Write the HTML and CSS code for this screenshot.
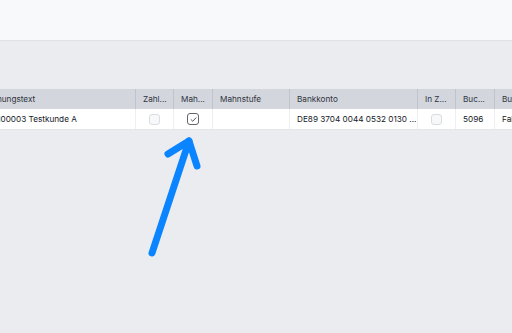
FILE: index.html
```html
<!DOCTYPE html>
<html lang="de">
<head>
<meta charset="utf-8">
<link rel="stylesheet" href="styles.css">
</head>
<body>
<div class="app">
  <header class="topbar"></header>
  <main class="content">
    <div class="grid-wrap">
      <div class="grid">
        <div class="row head">
          <div class="cell c1">Buchungstext</div>
          <div class="cell c2">Zahl...</div>
          <div class="cell c3">Mah...</div>
          <div class="cell c4">Mahnstufe</div>
          <div class="cell c5">Bankkonto</div>
          <div class="cell c6">In Z...</div>
          <div class="cell c7">Buc...</div>
          <div class="cell c8">Buchungsart</div>
        </div>
        <div class="row body">
          <div class="cell c1">KD-100003 Testkunde A</div>
          <div class="cell c2 center"><span class="cb"></span></div>
          <div class="cell c3 center"><span class="cb checked"><svg viewBox="0 0 12 12" width="9" height="9"><path d="M2.8 6.2 L5 8.3 L9.2 3.8" fill="none" stroke="#3b3f46" stroke-width="1.2" stroke-linecap="round" stroke-linejoin="round"/></svg></span></div>
          <div class="cell c4"></div>
          <div class="cell c5">DE89 3704 0044 0532 0130 ...</div>
          <div class="cell c6 center"><span class="cb"></span></div>
          <div class="cell c7">5096</div>
          <div class="cell c8">Faktura</div>
        </div>
      </div>
    </div>
  </main>
  <svg class="arrow" width="512" height="333" viewBox="0 0 512 333">
    <g fill="none" stroke="#0a84ff" stroke-width="7" stroke-linecap="round" stroke-linejoin="round">
      <path d="M152 253 L189 141"/>
      <path d="M168 154 L189 141 L197 166"/>
    </g>
  </svg>
</div>
</body>
</html>
```
FILE: styles.css
```css
* { box-sizing: border-box; }
html, body { margin: 0; padding: 0; }
body {
  font-family: Inter, "Noto Sans", sans-serif;
  background: #ebecef;
  width: 512px;
  height: 333px;
  overflow: hidden;
}
.app { position: relative; width: 512px; height: 333px; }
.topbar {
  height: 41px;
  background: #f8f9fb;
  border-bottom: 1px solid #dfe1e5;
}
.content { padding-top: 48px; }
.grid-wrap { overflow: hidden; width: 512px; }
.grid { margin-left: -25px; width: 600px; }
.row { display: flex; }
.row.head { background: #d3d6dd; height: 20px; }
.row.body { background: #ffffff; height: 21px; border-bottom: 1px solid #e3e5e9; }
.cell {
  flex: none;
  display: flex;
  align-items: center;
  padding: 0 2px 0 7px;
  font-size: 8.2px;
  white-space: nowrap;
  overflow: hidden;
}
.head .cell { color: #30353d; border-right: 1px solid #bfc3cb; }
.body .cell { color: #15191f; border-right: 1px solid #eceef1; }
.c1 { width: 161px; }
.c2 { width: 38px; }
.c3 { width: 39px; }
.c4 { width: 77px; }
.c5 { width: 128px; }
.c6 { width: 38px; }
.c7 { width: 39px; }
.c8 { width: 80px; }
.body .center { justify-content: center; padding: 0; }
.cb {
  width: 11px;
  height: 11px;
  border: 1px solid #d9dce1;
  border-radius: 3px;
  background: #f7f8fa;
  display: flex;
  align-items: center;
  justify-content: center;
}
.cb.checked { width: 12px; height: 12px; border-color: #62666d; background: #fff; }
.arrow { position: absolute; left: 0; top: 0; pointer-events: none; }
```
